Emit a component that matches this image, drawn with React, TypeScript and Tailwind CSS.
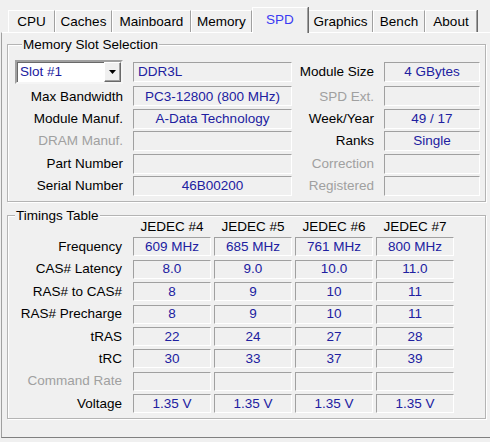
import React from "react";

const VAL = "text-[#2020a0]";

function Field({ children, align = "center", className = "" }: { children?: React.ReactNode; align?: "center" | "left"; className?: string }) {
  return (
    <div
      className={`h-[20px] border border-t-[#a0a0a0] border-l-[#a0a0a0] border-r-white border-b-white bg-[#f0f0f0] flex items-center ${
        align === "center" ? "justify-center" : "justify-start pl-[4px]"
      } ${VAL} leading-none whitespace-nowrap ${className}`}
    >
      {children}
    </div>
  );
}

function Label({ children, disabled = false, className = "" }: { children: React.ReactNode; disabled?: boolean; className?: string }) {
  return (
    <div
      className={`flex items-center justify-end whitespace-nowrap leading-none ${
        disabled ? "text-[#a0a0a0]" : "text-black"
      } ${className}`}
    >
      {children}
    </div>
  );
}

const tabs: { name: string; w: string; active?: boolean }[] = [
  { name: "CPU", w: "w-[47px]" },
  { name: "Caches", w: "w-[57px]" },
  { name: "Mainboard", w: "w-[79px]" },
  { name: "Memory", w: "w-[61px]" },
  { name: "SPD", w: "w-[56px]", active: true },
  { name: "Graphics", w: "w-[65px]" },
  { name: "Bench", w: "w-[52px]" },
  { name: "About", w: "w-[52px]" },
];

const timings: { label: string; disabled?: boolean; vals: string[] }[] = [
  { label: "Frequency", vals: ["609 MHz", "685 MHz", "761 MHz", "800 MHz"] },
  { label: "CAS# Latency", vals: ["8.0", "9.0", "10.0", "11.0"] },
  { label: "RAS# to CAS#", vals: ["8", "9", "10", "11"] },
  { label: "RAS# Precharge", vals: ["8", "9", "10", "11"] },
  { label: "tRAS", vals: ["22", "24", "27", "28"] },
  { label: "tRC", vals: ["30", "33", "37", "39"] },
  { label: "Command Rate", disabled: true, vals: ["", "", "", ""] },
  { label: "Voltage", vals: ["1.35 V", "1.35 V", "1.35 V", "1.35 V"] },
];

export default function App() {
  return (
    <div className="w-[490px] h-[442px] bg-[#f0f0f0] overflow-hidden font-['Liberation_Sans',Arial,sans-serif] text-[13.5px] select-none">
      {/* Tabs */}
      <div className="h-[32px] flex items-end pl-[8px]">
        {tabs.map((t) =>
          t.active ? (
            <div
              key={t.name}
              className={`${t.w} h-[26px] -mb-[1px] relative z-10 bg-[#f0f0f0] border-t border-l border-white border-r border-r-[#a0a0a0] shadow-[1px_0_0_#696969] flex items-center justify-center pb-[2px] text-[#3a3af2] leading-none`}
            >
              {t.name}
            </div>
          ) : (
            <div
              key={t.name}
              className={`${t.w} h-[22px] border-t border-l border-white border-r border-r-[#a0a0a0] shadow-[1px_0_0_#696969] flex items-center justify-center text-black leading-none`}
            >
              {t.name}
            </div>
          )
        )}
      </div>

      {/* Tab page */}
      <div className="ml-[1px] w-[500px] h-[406px] border-t border-t-white border-l border-l-[#a0a0a0] border-b border-b-[#808080] pl-[5px] pt-[4px]">
        {/* Memory Slot Selection */}
        <fieldset className="w-[479px] border border-[#b4b4b4] shadow-[inset_1px_1px_0_#ffffff,1px_1px_0_#ffffff] pl-[7px] pt-[7px] pb-[5px]">
          <legend className="ml-[7px] px-[1px] bg-[#f0f0f0] leading-[15px] text-black">Memory Slot Selection</legend>
          <div className="grid grid-cols-[108px_159px_72px_96px] grid-rows-[24px_20px_20px_20px_20px_20px] gap-x-[10px] gap-y-[2.4px] pt-[1px]">
            {/* Row 1 */}
            <div className="h-[24px] bg-white border-2 border-t-[#a0a0a0] border-l-[#a0a0a0] border-r-[#f5f5f5] border-b-[#f5f5f5] shadow-[inset_1px_1px_0_#696969] flex items-center justify-between">
              <span className={`${VAL} pl-[3px] leading-none`}>Slot #1</span>
              <div className="w-[17px] h-[20px] bg-[#f0f0f0] border border-t-white border-l-white border-r-[#696969] border-b-[#696969] shadow-[inset_-1px_-1px_0_#a0a0a0] flex items-center justify-center">
                <svg width="7" height="4" viewBox="0 0 7 4">
                  <path d="M0 0H7L3.5 4Z" fill="#000" />
                </svg>
              </div>
            </div>
            <Field align="left" className="self-center">DDR3L</Field>
            <Label>Module Size</Label>
            <Field className="self-center">4 GBytes</Field>

            {/* Row 2 */}
            <Label>Max Bandwidth</Label>
            <Field>PC3-12800 (800 MHz)</Field>
            <Label disabled>SPD Ext.</Label>
            <Field />

            {/* Row 3 */}
            <Label>Module Manuf.</Label>
            <Field>A-Data Technology</Field>
            <Label>Week/Year</Label>
            <Field>49 / 17</Field>

            {/* Row 4 */}
            <Label disabled>DRAM Manuf.</Label>
            <Field />
            <Label>Ranks</Label>
            <Field>Single</Field>

            {/* Row 5 */}
            <Label>Part Number</Label>
            <Field />
            <Label disabled>Correction</Label>
            <Field />

            {/* Row 6 */}
            <Label>Serial Number</Label>
            <Field>46B00200</Field>
            <Label disabled>Registered</Label>
            <Field />
          </div>
        </fieldset>

        {/* Timings Table */}
        <fieldset className="mt-[6px] w-[479px] border border-[#b4b4b4] shadow-[inset_1px_1px_0_#ffffff,1px_1px_0_#ffffff] pb-[5px]">
          <legend className="ml-[7px] px-[1px] bg-[#f0f0f0] leading-[15px] text-black">Timings Table</legend>
          <div className="grid grid-cols-[122px_78px_78px_78px_78px] gap-x-[3px] gap-y-[3.4px] -mt-[4px]">
            <div className="h-[15px]" />
            {["JEDEC #4", "JEDEC #5", "JEDEC #6", "JEDEC #7"].map((h) => (
              <div key={h} className="h-[15px] flex items-center justify-center leading-none text-black whitespace-nowrap">
                {h}
              </div>
            ))}
            {timings.map((r) => (
              <React.Fragment key={r.label}>
                <Label disabled={r.disabled} className="pr-[8px] h-[19px]">
                  {r.label}
                </Label>
                {r.vals.map((v, i) => (
                  <Field key={i} className="!h-[19px]">
                    {v}
                  </Field>
                ))}
              </React.Fragment>
            ))}
          </div>
        </fieldset>
      </div>
    </div>
  );
}
